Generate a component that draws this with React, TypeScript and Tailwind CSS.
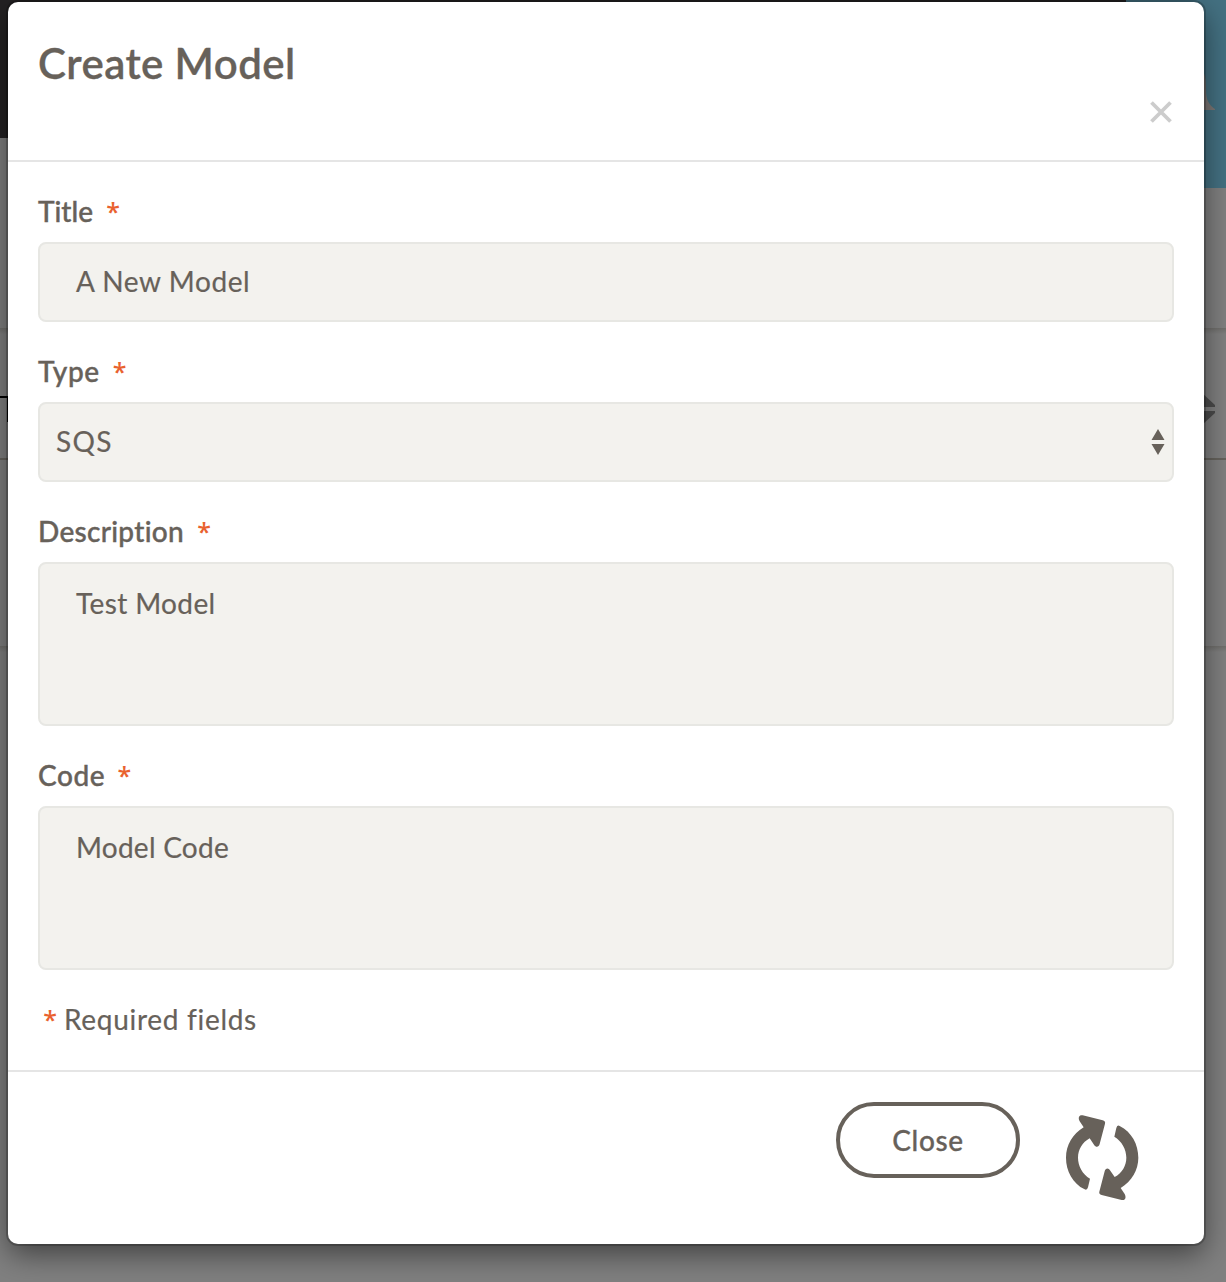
import React from 'react';

function Star({ className = '' }: { className?: string }) {
  return (
    <span className={`flex w-3 shrink-0 justify-center font-['Open_Sans',sans-serif] text-[25px] leading-[40px] font-semibold text-[#e9622f] ${className}`}>*</span>
  );
}

function Label({ children, spacing, gap }: { children: string; spacing: string; gap: string }) {
  return (
    <div className={`-mt-px flex h-[41px] items-start text-[28px] leading-[41px] font-medium ${gap}`}>
      <span className={`[-webkit-text-stroke:0.4px_#67615a] ${spacing}`}>{children}</span>
      <Star />
    </div>
  );
}

const field = 'rounded-lg border-2 border-[#e7e7e3] bg-[#f3f2ee] [-webkit-text-stroke:0.2px_#67615a]';

function Backdrop() {
  return (
    <div className="flex h-full flex-col bg-[#808080]">
      <div className="flex h-[188px] items-start">
        <div className="h-[138px] flex-1 bg-[#242223]" />
        <div className="flex h-[188px] w-[100px] items-start justify-end bg-[#447182]">
          <svg viewBox="0 0 24 44" className="mt-[66px] mr-[11px] h-[44px] w-[24px]" fill="#7c7775">
            <path d="M0 44V0C14 0 15 10 15 24C15 34 18 39 24 43V44Z" />
          </svg>
        </div>
      </div>
      <div className="h-[140px]" />
      <div className="h-[6px] bg-linear-to-b from-[#706f6c] to-[#808080]" />
      <div className="flex h-[124px] items-start justify-between">
        <div className="mt-[62px] flex h-[26px] w-[16px] justify-center border-t-2 border-black">
          <div className="h-6 w-[2px] bg-black" />
        </div>
        <svg viewBox="0 0 26 30" className="mt-[60px] mr-[11px] h-[30px] w-[26px]" fill="#4c4c4c">
          <path d="M13 -1L26 11V13H0V11ZM0 17H26V19L13 31L0 19Z" />
        </svg>
      </div>
      <div className="h-[2px] bg-[#66635d]" />
      <div className="h-[186px]" />
      <div className="h-[6px] bg-linear-to-b from-[#706f6c] to-[#808080]" />
    </div>
  );
}

export default function App() {
  return (
    <div className="relative h-[1282px] w-[1226px] overflow-hidden font-['Lato',sans-serif] text-[#67615a]">
      <Backdrop />
      <div className="absolute inset-x-0 top-0 flex flex-col px-[8px] pt-[2px] pr-[22px]">
        <div className="flex h-[1242px] flex-col rounded-[10px] bg-white shadow-[0_0_0_2px_rgba(0,0,0,0.2),0_10px_30px_rgba(0,0,0,0.5)]">
          <header className="flex h-[160px] flex-col border-b-2 border-[#e5e5e5] px-[30px] pt-[35px]">
            <h1 className="h-[52px] text-[42px] leading-[52px] font-semibold tracking-[0.42px] [-webkit-text-stroke:0.3px_#67615a]">Create Model</h1>
            <svg viewBox="0 0 22 22" className="mt-[12px] mr-[2px] h-[22px] w-[22px] self-end" stroke="#cccccc" strokeWidth="3.8">
              <path d="M1.5 1.5L20.5 20.5M20.5 1.5L1.5 20.5" />
            </svg>
          </header>
          <main className="flex h-[910px] flex-col border-b-2 border-[#e5e5e5] px-[30px] pt-[30px]">
            <Label spacing="tracking-[0px]" gap="gap-[14px]">Title</Label>
            <div className={`mt-[10px] flex h-[80px] items-center pb-[2px] pl-[36px] text-[28px] ${field}`}>
              <span className="tracking-[0.58px]">A New Model</span>
            </div>
            <div className="h-[30px]" />
            <Label spacing="tracking-[0.6px]" gap="gap-[14px]">Type</Label>
            <div className={`mt-[10px] flex h-[80px] items-center justify-between pr-[7px] pl-[16px] text-[28px] ${field}`}>
              <span className="pb-[2px] tracking-[1.3px]">SQS</span>
              <svg viewBox="0 0 14 26" className="h-[26px] w-[14px]" fill="#67615a">
                <path d="M7 0L13.5 11H0.5ZM0.5 15H13.5L7 26Z" />
              </svg>
            </div>
            <div className="h-[30px]" />
            <Label spacing="tracking-[0.3px]" gap="gap-[14px]">Description</Label>
            <div className={`mt-[10px] h-[164px] pt-[19px] pl-[36px] text-[28px] leading-[40px] ${field}`}>
              <span className="tracking-[0.38px]">Test Model</span>
            </div>
            <div className="h-[30px]" />
            <Label spacing="tracking-[0.6px]" gap="gap-[13px]">Code</Label>
            <div className={`mt-[10px] h-[164px] pt-[19px] pl-[36px] text-[28px] leading-[40px] ${field}`}>
              <span className="tracking-[0.25px]">Model Code</span>
            </div>
            <div className="mt-[29px] flex gap-[8px] pl-[6px] text-[28px] leading-[40px]">
              <Star />
              <span className="tracking-[0.7px] [-webkit-text-stroke:0.2px_#67615a]">Required fields</span>
            </div>
          </main>
          <footer className="flex items-start justify-end pt-[30px] pr-[50px]">
            <button className="flex h-[76px] w-[184px] items-center justify-center rounded-full border-4 border-[#67615a] pb-px text-[28px] font-medium">
              <span className="tracking-[0.6px] [-webkit-text-stroke:0.3px_#67615a]">Close</span>
            </button>
            <svg viewBox="0 0 312 330" className="mt-[-2px] ml-[30px] h-[110px] w-[104px]" fill="#67615a">
              <path id="arrow" d="M104 268C68 250 48 213 48 173C48 136 68 102 101 82L89 64C83 52 88 44 98 46L158 61Q167 64 165 71L149 132C146 142 138 143 132 134L119 115C97 127 84 149 84 173C84 198 98 223 120 236L114 262Q111 272 104 268Z" />
              <use href="#arrow" transform="rotate(180 156.5 173)" />
            </svg>
          </footer>
        </div>
      </div>
    </div>
  );
}
